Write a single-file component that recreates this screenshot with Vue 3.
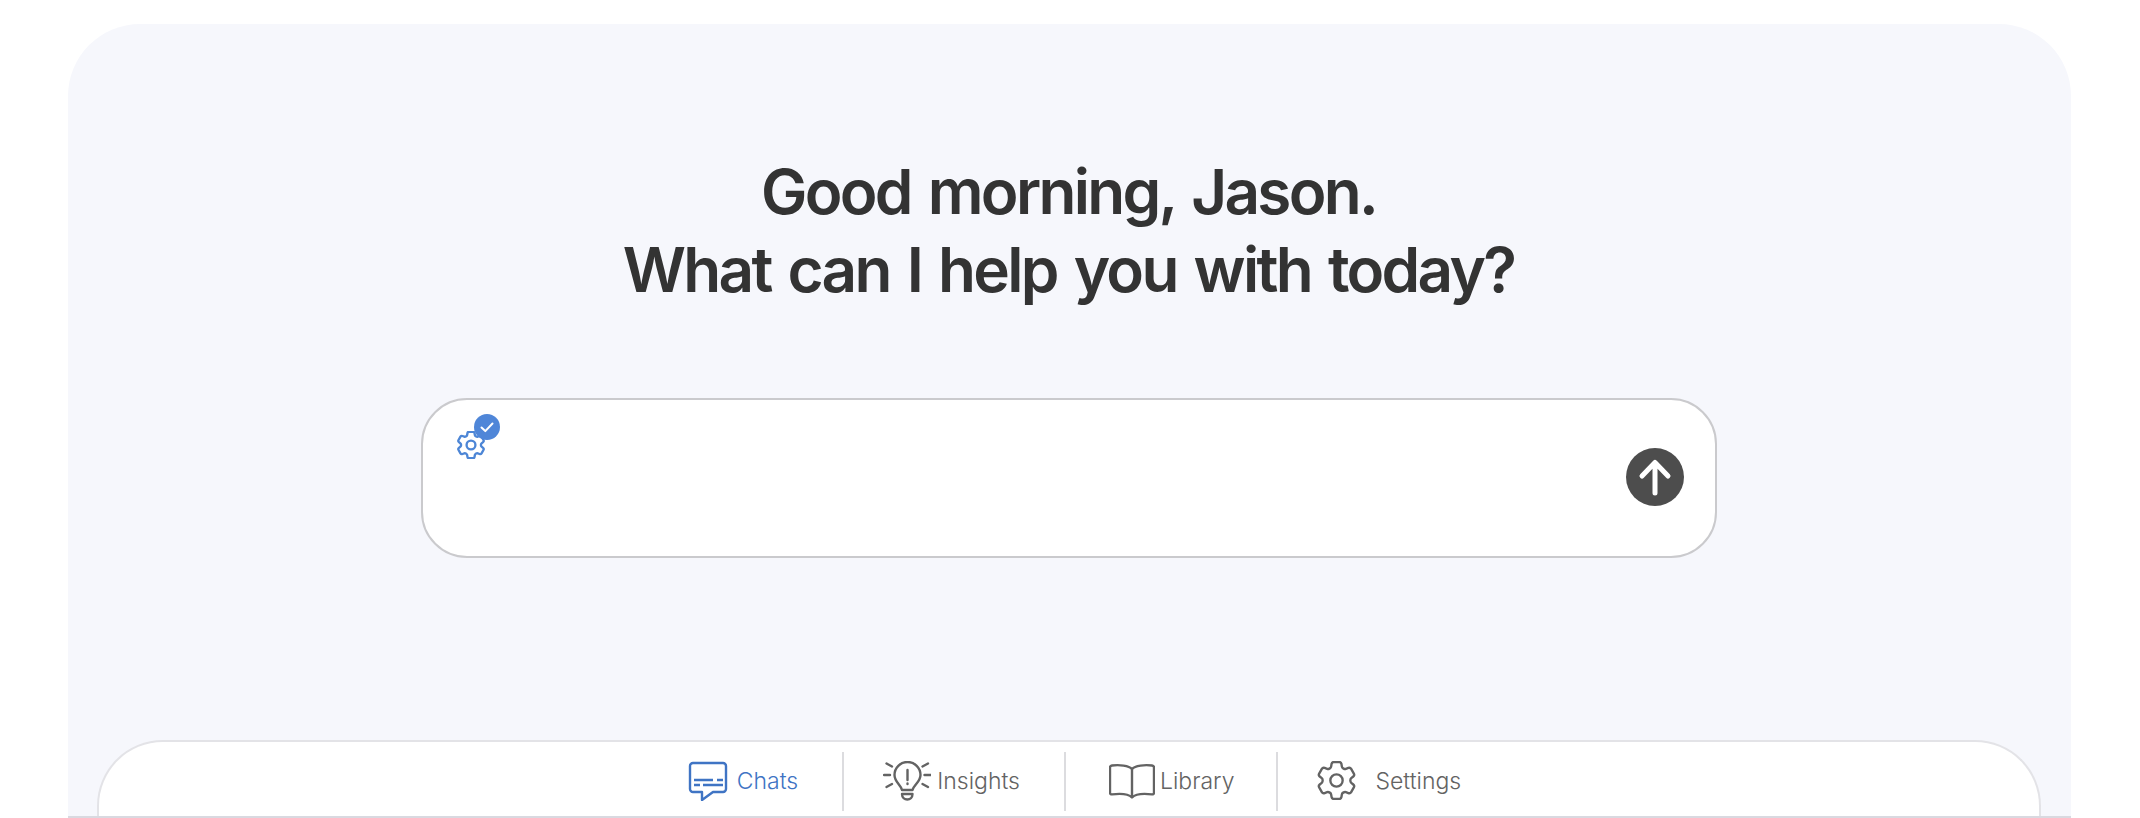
<script setup>
const GEAR = "M9.594 3.94c.09-.542.56-.94 1.11-.94h2.593c.55 0 1.02.398 1.11.94l.213 1.281c.063.374.313.686.645.87.074.04.147.083.22.127.325.196.72.257 1.075.124l1.217-.456a1.125 1.125 0 0 1 1.37.49l1.296 2.247a1.125 1.125 0 0 1-.26 1.431l-1.003.827c-.293.241-.438.613-.43.992a7.723 7.723 0 0 1 0 .255c-.008.378.137.75.43.991l1.004.827c.424.35.534.955.26 1.43l-1.298 2.247a1.125 1.125 0 0 1-1.369.491l-1.217-.456c-.355-.133-.75-.072-1.076.124a6.47 6.47 0 0 1-.22.128c-.331.183-.581.495-.644.869l-.213 1.281c-.09.543-.56.94-1.11.94h-2.594c-.55 0-1.019-.398-1.11-.94l-.213-1.281c-.062-.374-.312-.686-.644-.87a6.52 6.52 0 0 1-.22-.127c-.325-.196-.72-.257-1.076-.124l-1.217.456a1.125 1.125 0 0 1-1.369-.49l-1.297-2.247a1.125 1.125 0 0 1 .26-1.431l1.004-.827c.292-.24.437-.613.43-.991a6.932 6.932 0 0 1 0-.255c.007-.38-.138-.751-.43-.992l-1.004-.827a1.125 1.125 0 0 1-.26-1.43l1.297-2.247a1.125 1.125 0 0 1 1.37-.491l1.216.456c.356.133.751.072 1.076-.124.072-.044.146-.086.22-.128.332-.183.582-.495.644-.869l.214-1.28Z"
</script>

<template>
  <div class="page">
    <main class="panel">
      <h1>Good morning, Jason.<br>What can I help you with today?</h1>

      <div class="prompt">
        <div class="tool">
          <svg class="tool-gear" viewBox="2.5 2.5 19 19" fill="none" stroke="currentColor" stroke-width="1.6">
            <path :d="GEAR" />
            <circle cx="12" cy="12" r="3" />
          </svg>
          <span class="badge">
            <svg viewBox="0 0 26 26" fill="none" stroke="#fff" stroke-width="2" stroke-linecap="round" stroke-linejoin="round">
              <path d="M7.500 13.500l3.800 3.600 7.200-7.600" />
            </svg>
          </span>
        </div>
        <button class="send">
          <svg viewBox="0 0 58 58" fill="none" stroke="#fff" stroke-width="5" stroke-linecap="round" stroke-linejoin="round">
            <path d="M29 45V15M16 28L29 14.500 42 28" />
          </svg>
        </button>
      </div>

      <nav class="tabs">
        <a class="tab chats">
          <svg width="40" height="40" viewBox="0 0 40 40" fill="none" stroke="currentColor" stroke-width="2.400" stroke-linejoin="round">
            <path d="M5 2h30a3 3 0 0 1 3 3v23a3 3 0 0 1-3 3H25l-11 8v-8H5a3 3 0 0 1-3-3V5a3 3 0 0 1 3-3z" />
            <path d="M6 19h19M29 19h6M6 24h6M15 24h20" />
          </svg>
          <span>Chats</span>
        </a>
        <a class="tab insights">
          <svg width="48" height="40" viewBox="0 0 48 40" fill="none" stroke="currentColor" stroke-width="2.400" stroke-linecap="round" stroke-linejoin="round">
            <path d="M19 29C18 24 11.500 21 11.500 14a13 13 0 0 1 26 0C37.500 21 30.500 24 29.500 29z" />
            <path d="M19 33h10.500c0 3.500-2.500 5.500-5.200 5.500S19 36.500 19 33z" />
            <path d="M24.500 9v10M24.500 22.500v.5" />
            <path d="M3.500 2.500L9 5.500M1 14h6M3.500 26L9 23M45 2.500L39.500 5.500M47.500 14h-6M45 26l-5.500-3" />
          </svg>
          <span>Insights</span>
        </a>
        <a class="tab library">
          <svg width="46" height="36" viewBox="0 0 46 36" fill="none" stroke="currentColor" stroke-width="2.400" stroke-linejoin="round">
            <path d="M23 6C20 2.500 10 1.500 3 2.500 1.800 2.700 1 3.500 1 4.500V30c0 1 .8 1.500 2 1.400C10 30.500 19 30.500 23 34.500c4-4 13-4 20-3.100 1.200.1 2-.4 2-1.400V4.500c0-1-.8-1.800-2-2C36 1.500 26 2.500 23 6z" />
            <path d="M23 6v28.500" />
          </svg>
          <span>Library</span>
        </a>
        <a class="tab settings">
          <svg width="39" height="39" viewBox="2.500 2.500 19 19" fill="none" stroke="currentColor" stroke-width="1.150">
            <path :d="GEAR" />
            <circle cx="12" cy="12" r="3" />
          </svg>
          <span>Settings</span>
        </a>
      </nav>
    </main>
  </div>
</template>

<style>
html, body {
  margin: 0;
  background: #fff;
}
</style>

<style scoped>
.page {
  height: 818px;
  box-sizing: border-box;
  padding: 24px 69px 0 68px;
  overflow: hidden;
  font-family: Inter, "Liberation Sans", sans-serif;
}

.panel {
  height: 794px;
  box-sizing: border-box;
  display: flex;
  flex-direction: column;
  align-items: center;
  background: #f6f7fc;
  border-radius: 72px 72px 0 0;
  border-bottom: 2px solid #d9d9e0;
}

h1 {
  margin: 129px 2px 0 0;
  font-size: 62px;
  line-height: 78px;
  font-weight: 600;
  letter-spacing: -2.700px;
  word-spacing: 4px;
  text-align: center;
  color: #333;
}

.prompt {
  width: 1296px;
  height: 160px;
  margin: 89px 1px 0 0;
  box-sizing: border-box;
  display: flex;
  align-items: center;
  padding: 0 31px 2px 34px;
  background: #fff;
  border: 2px solid #cacacd;
  border-radius: 46px;
}

.tool {
  position: relative;
  align-self: flex-start;
  margin-top: 31px;
  width: 28px;
  height: 28px;
  color: #4d86d6;
}

.tool-gear {
  display: block;
  width: 28px;
  height: 28px;
}

.badge {
  position: absolute;
  left: 17px;
  top: -17px;
  width: 26px;
  height: 26px;
  border-radius: 50%;
  background: #4f86d8;
}

.badge svg {
  display: block;
}

.send {
  margin-left: auto;
  width: 58px;
  height: 58px;
  padding: 0;
  border: 0;
  border-radius: 50%;
  background: #4d4d4d;
}

.send svg {
  display: block;
}

.tabs {
  margin-top: auto;
  align-self: stretch;
  margin-left: 29px;
  margin-right: 30px;
  height: 76px;
  box-sizing: border-box;
  display: flex;
  justify-content: center;
  padding: 10px 0 5px 11px;
  background: #fff;
  border: 2px solid #e3e3e7;
  border-bottom: 0;
  border-radius: 66px 66px 0 0;
}

.tab {
  display: flex;
  align-items: center;
  padding-bottom: 2px;
  font-size: 23px;
  font-weight: 300;
  color: #636363;
}

.tab + .tab {
  border-left: 2px solid #dcdcdf;
}

.chats {
  color: #3f74c4;
  gap: 9px;
  padding-right: 44px;
}

.insights {
  gap: 6px;
  padding-left: 39px;
  padding-right: 44px;
}

.library {
  gap: 5px;
  padding-left: 43px;
  padding-right: 42px;
}

.settings {
  gap: 19px;
  padding-left: 39px;
}
</style>
